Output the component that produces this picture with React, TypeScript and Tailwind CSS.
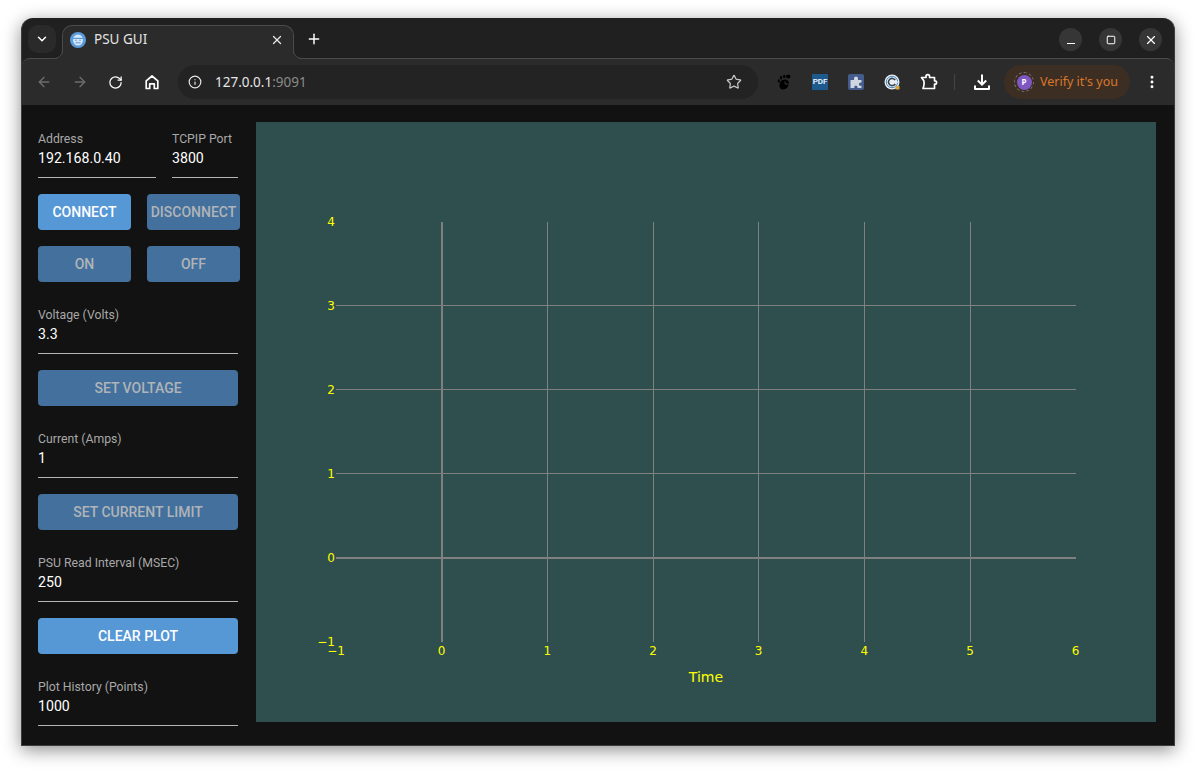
import { ArrowLeft, ArrowRight, ChevronDown, EllipsisVertical, Info, Plus, RotateCw, Square, Star, X } from 'lucide-react';

const XS = [-1, 0, 1, 2, 3, 4, 5, 6];
const YS = [4, 3, 2, 1, 0];

function Field({ label, value, className = '' }: { label: string; value: string; className?: string }) {
  return (
    <div className={`flex h-[48px] flex-col border-b border-[#b4b4b4] ${className}`}>
      <span className="h-[17px] pt-px text-[12.25px] leading-[16px] whitespace-nowrap text-[#a8a8a8]">{label}</span>
      <span className="mt-px text-[14.15px] leading-[20px] text-white">{value}</span>
    </div>
  );
}

function Btn({ label, on = false, className = '' }: { label: string; on?: boolean; className?: string }) {
  return (
    <div
      className={`flex h-[36px] shrink-0 items-center justify-center rounded-[4px] text-[14px] font-medium whitespace-nowrap ${
        on ? 'bg-[#5698d6] text-white' : 'bg-[#43709d] text-[#b0b4b8]'
      } ${className}`}
    >
      {label}
    </div>
  );
}

function Plot() {
  const xAt = (v: number) => 185.67 + v * 105.67;
  const yAt = (v: number) => 436 - v * 84;
  return (
    <svg width="900" height="600" className="block shrink-0 bg-[#2f4f4f]" fontFamily="'DejaVu Sans', sans-serif">
      {[1, 2, 3, 4, 5].map((v) => (
        <line key={v} x1={Math.floor(xAt(v)) + 0.5} x2={Math.floor(xAt(v)) + 0.5} y1="100" y2="520" stroke="#808080" strokeWidth="1" />
      ))}
      {[1, 2, 3].map((v) => (
        <line key={v} x1="80" x2="820" y1={yAt(v) - 0.5} y2={yAt(v) - 0.5} stroke="#808080" strokeWidth="1" />
      ))}
      <line x1="186" x2="186" y1="100" y2="520" stroke="#808080" strokeWidth="2" />
      <line x1="80" x2="820" y1={yAt(0)} y2={yAt(0)} stroke="#808080" strokeWidth="2" />
      {XS.map((v) => (
        <text key={v} x={xAt(v)} y="533" textAnchor="middle" fontSize="12" fill="#ffff00">
          {v < 0 ? `\u2212${-v}` : v}
        </text>
      ))}
      {YS.map((v) => (
        <text key={v} x="79" y={yAt(v) + 3.5} textAnchor="end" fontSize="12" fill="#ffff00">
          {v}
        </text>
      ))}
      <text x="79" y="524" textAnchor="end" fontSize="12" fill="#ffff00">
        {'\u22121'}
      </text>
      <text x="450" y="560" textAnchor="middle" fontSize="14" fill="#ffff00">
        Time
      </text>
    </svg>
  );
}

function Favicon() {
  return (
    <svg width="16" height="16" viewBox="0 0 16 16" className="shrink-0">
      <circle cx="8" cy="8" r="8" fill="#5a9bdc" />
      <ellipse cx="8" cy="8" rx="5" ry="5.500" fill="#d5e6f7" />
      <rect x="3" y="5.800" width="10" height="1.200" fill="#5a9bdc" />
      <circle cx="6" cy="8.200" r="0.800" fill="#5a9bdc" />
      <circle cx="10" cy="8.200" r="0.800" fill="#5a9bdc" />
      <rect x="5.500" y="10.300" width="5" height="1" fill="#5a9bdc" />
    </svg>
  );
}

function GnomeFoot() {
  return (
    <svg width="16" height="18" viewBox="0 0 16 18">
      <path d="M8.500 6.500c3 0 4.800 2 4.300 4.800-.5 3-2.800 5.200-5.500 5.200-2.400 0-3.800-1.600-3.800-3.700 0-3.300 2-6.300 5-6.300z" fill="#000" />
      <ellipse cx="2.800" cy="8" rx="1.100" ry="1.700" fill="#000" />
      <ellipse cx="5" cy="4.800" rx="1.200" ry="1.800" fill="#000" />
      <ellipse cx="8.300" cy="3.400" rx="1.300" ry="1.700" fill="#000" />
      <ellipse cx="12.300" cy="3.600" rx="2.200" ry="2" fill="#000" />
      <path d="M12.800 11.200h-3a1.600 1.600 0 0 1 0-2.800" fill="none" stroke="#2b2b2b" strokeWidth="1.200" />
    </svg>
  );
}

function BluePuzzle() {
  return (
    <svg width="16" height="16" viewBox="0 0 16 16">
      <rect width="16" height="16" rx="2" fill="#445c8c" />
      <path d="M2.500 6H6V4.500a2 2 0 1 1 4 0V6h3.500v2.600h-1a1.600 1.600 0 0 0 0 3.200h1V14H9.500v-1a1.600 1.600 0 0 0-3.200 0v1H2.500z" fill="#cfd6e2" />
    </svg>
  );
}

function CircleC() {
  return (
    <svg width="16" height="16" viewBox="0 0 16 16">
      <circle cx="8" cy="8" r="7.500" fill="#e9eef2" />
      <circle cx="8" cy="8" r="5.700" fill="none" stroke="#4a88c4" strokeWidth="1" />
      <path d="M11.200 6.200A3.600 3.600 0 1 0 11.200 9.800" fill="none" stroke="#33424f" strokeWidth="1.600" />
      <rect x="7.500" y="7.400" width="7" height="1.200" fill="#e9eef2" />
      <rect x="11.500" y="12" width="4" height="3.500" fill="#d9a93d" />
    </svg>
  );
}

function ExtensionOutline() {
  return (
    <svg width="18" height="18" viewBox="0 0 18 18" fill="none" stroke="#fff" strokeWidth="1.700" strokeLinejoin="round">
      <path d="M1.500 4.500H6V3.500a1.800 1.800 0 0 1 3.600 0v1H14.500v3.300h.4a1.700 1.700 0 0 1 0 3.400h-.4V15.500H3l.8-2.600c.5-1.700.5-3.400 0-5.100z" />
    </svg>
  );
}

// chrome's home glyph: outlined house with a door
function HomeIcon() {
  return (
    <svg width="16" height="16" viewBox="0 0 16 16" fill="none" stroke="#fff" strokeWidth="1.700" strokeLinejoin="round" className="ml-[21px]">
      <path d="M2.200 14.500V6.800L8 2l5.800 4.800v7.700h-3.500V9.800H5.700v4.700z" />
    </svg>
  );
}

function DownloadIcon() {
  return (
    <svg width="18" height="18" viewBox="0 0 18 18" fill="none" stroke="#fff" strokeWidth="2" className="ml-[18px]">
      <path d="M9 1.500v10M4.800 7.500 9 11.700l4.200-4.200" />
      <path d="M2 12.500V16h14v-3.500" strokeLinejoin="round" />
    </svg>
  );
}

function Flare({ side }: { side: 'left' | 'right' }) {
  return (
    <svg
      width="10"
      height="10"
      viewBox="0 0 10 10"
      className={`absolute bottom-0 ${side === 'left' ? '-left-[10px]' : '-right-[10px] -scale-x-100'}`}
    >
      <path d="M0 10c6 0 10-3 10-10v10z" fill="#2b2b2b" />
      <path d="M0 9.500c6 0 9.500-3 9.500-9.500" fill="none" stroke="#4b4b4b" />
    </svg>
  );
}

export default function App() {
  return (
    <div className="h-[770px] w-[1196px] overflow-hidden bg-white pt-[18px] pl-[21px] font-['Noto_Sans',sans-serif]">
      <div className="flex h-[728px] w-[1154px] flex-col overflow-hidden rounded-t-[12px] border-x border-b border-[#3c3c3c] bg-[#202020] shadow-[0_4px_18px_rgba(0,0,0,0.45)]">
        {/* tab strip */}
        <div className="flex h-[40px] shrink-0 items-end pl-[6px]">
          <div className="mb-[5px] flex h-[28px] w-[28px] items-center justify-center rounded-[10px] bg-[#2a2a2a]">
            <ChevronDown size={14} color="#fff" strokeWidth={2.5} />
          </div>
          <div className="relative z-10 ml-[6px] -mb-px flex h-[34px] w-[232px] items-center rounded-t-[10px] border-x border-t border-[#4b4b4b] bg-[#2b2b2b] pr-[9px] pb-[6px] pl-[7px]">
            <Favicon />
            <span className="ml-[8px] flex-1 text-[13.5px] text-[#e3e3e3]">PSU GUI</span>
            <X size={14} color="#e8e8e8" strokeWidth={2.2} />
            <Flare side="left" />
            <Flare side="right" />
          </div>
          <div className="mb-[11px] ml-[12px]">
            <Plus size={16} color="#fff" strokeWidth={2.2} />
          </div>
          <div className="mb-[7px] ml-auto flex gap-[17px] pr-[12px]">
            <div className="flex h-[23px] w-[23px] items-end justify-center rounded-full bg-[#363636] pb-[7px]">
              <div className="h-[1.5px] w-[8px] bg-white" />
            </div>
            <div className="flex h-[23px] w-[23px] items-center justify-center rounded-full bg-[#363636]">
              <Square size={10} color="#fff" strokeWidth={2.4} />
            </div>
            <div className="flex h-[23px] w-[23px] items-center justify-center rounded-full bg-[#363636]">
              <X size={14} color="#fff" strokeWidth={2} />
            </div>
          </div>
        </div>

        {/* toolbar */}
        <div className="flex h-[47px] shrink-0 items-center rounded-t-[8px] border-t border-[#4b4b4b] bg-[#2b2b2b] pl-[14px]">
          <ArrowLeft size={16} color="#6e6e6e" strokeWidth={2} />
          <ArrowRight size={16} color="#6e6e6e" strokeWidth={2} className="ml-[20px]" />
          <RotateCw size={15} color="#fff" strokeWidth={2} className="ml-[20px]" />
          <HomeIcon />
          <div className="ml-[18px] flex h-[34px] w-[580px] items-center rounded-full bg-[#232323] pl-[10px]">
            <Info size={14} color="#e8e8e8" strokeWidth={2} />
            <span className="ml-[13px] text-[13.5px] text-[#e6e6e6]">
              127.0.0.1<span className="text-[#8a8a8a]">:9091</span>
            </span>
            <Star size={16} color="#c8c8c8" strokeWidth={1.8} className="mr-[16px] ml-auto" />
          </div>
          <div className="ml-[18px] flex w-[16px] justify-center">
            <GnomeFoot />
          </div>
          <div className="ml-[20px] flex h-[16px] w-[16px] items-center justify-center bg-[#1f5a8f] font-['Roboto',sans-serif] text-[8px] font-medium text-white">
            PDF
          </div>
          <div className="ml-[20px]">
            <BluePuzzle />
          </div>
          <div className="ml-[20px]">
            <CircleC />
          </div>
          <div className="ml-[20px]">
            <ExtensionOutline />
          </div>
          <div className="ml-[16px] h-[16px] w-px bg-[#444]" />
          <DownloadIcon />
          <div className="ml-[13px] flex h-[34px] w-[126px] shrink-0 items-center rounded-full bg-[#3d2e24] pl-[10px]">
            <div className="flex h-[20px] w-[20px] items-center justify-center rounded-full border border-dashed border-[#777]">
              <div className="flex h-[15px] w-[15px] items-center justify-center rounded-full bg-[#7e57c2] text-[8px] font-bold text-white">P</div>
            </div>
            <span className="ml-[6px] text-[12.5px] whitespace-nowrap text-[#d9772b]">Verify it's you</span>
          </div>
          <EllipsisVertical size={16} color="#fff" strokeWidth={2.4} className="ml-[14px]" />
        </div>

        {/* page */}
        <div className="flex flex-1 gap-[18px] bg-[#121212] pt-[17px] pl-[16px] font-['Roboto',sans-serif]">
          <div className="flex w-[200px] shrink-0 flex-col pt-[8px]">
            <div className="flex gap-[16px]">
              <Field label="Address" value="192.168.0.40" className="w-[118px]" />
              <Field label="TCPIP Port" value="3800" className="w-[66px]" />
            </div>
            <div className="mt-[16px] flex gap-[16px]">
              <Btn label="CONNECT" on className="w-[93px]" />
              <Btn label="DISCONNECT" className="w-[93px]" />
            </div>
            <div className="mt-[16px] flex gap-[16px]">
              <Btn label="ON" className="w-[93px]" />
              <Btn label="OFF" className="w-[93px]" />
            </div>
            <Field label="Voltage (Volts)" value="3.3" className="mt-[24px]" />
            <Btn label="SET VOLTAGE" className="mt-[16px]" />
            <Field label="Current (Amps)" value="1" className="mt-[24px]" />
            <Btn label="SET CURRENT LIMIT" className="mt-[16px]" />
            <Field label="PSU Read Interval (MSEC)" value="250" className="mt-[24px]" />
            <Btn label="CLEAR PLOT" on className="mt-[16px]" />
            <Field label="Plot History (Points)" value="1000" className="mt-[24px]" />
          </div>
          <Plot />
        </div>
      </div>
    </div>
  );
}
